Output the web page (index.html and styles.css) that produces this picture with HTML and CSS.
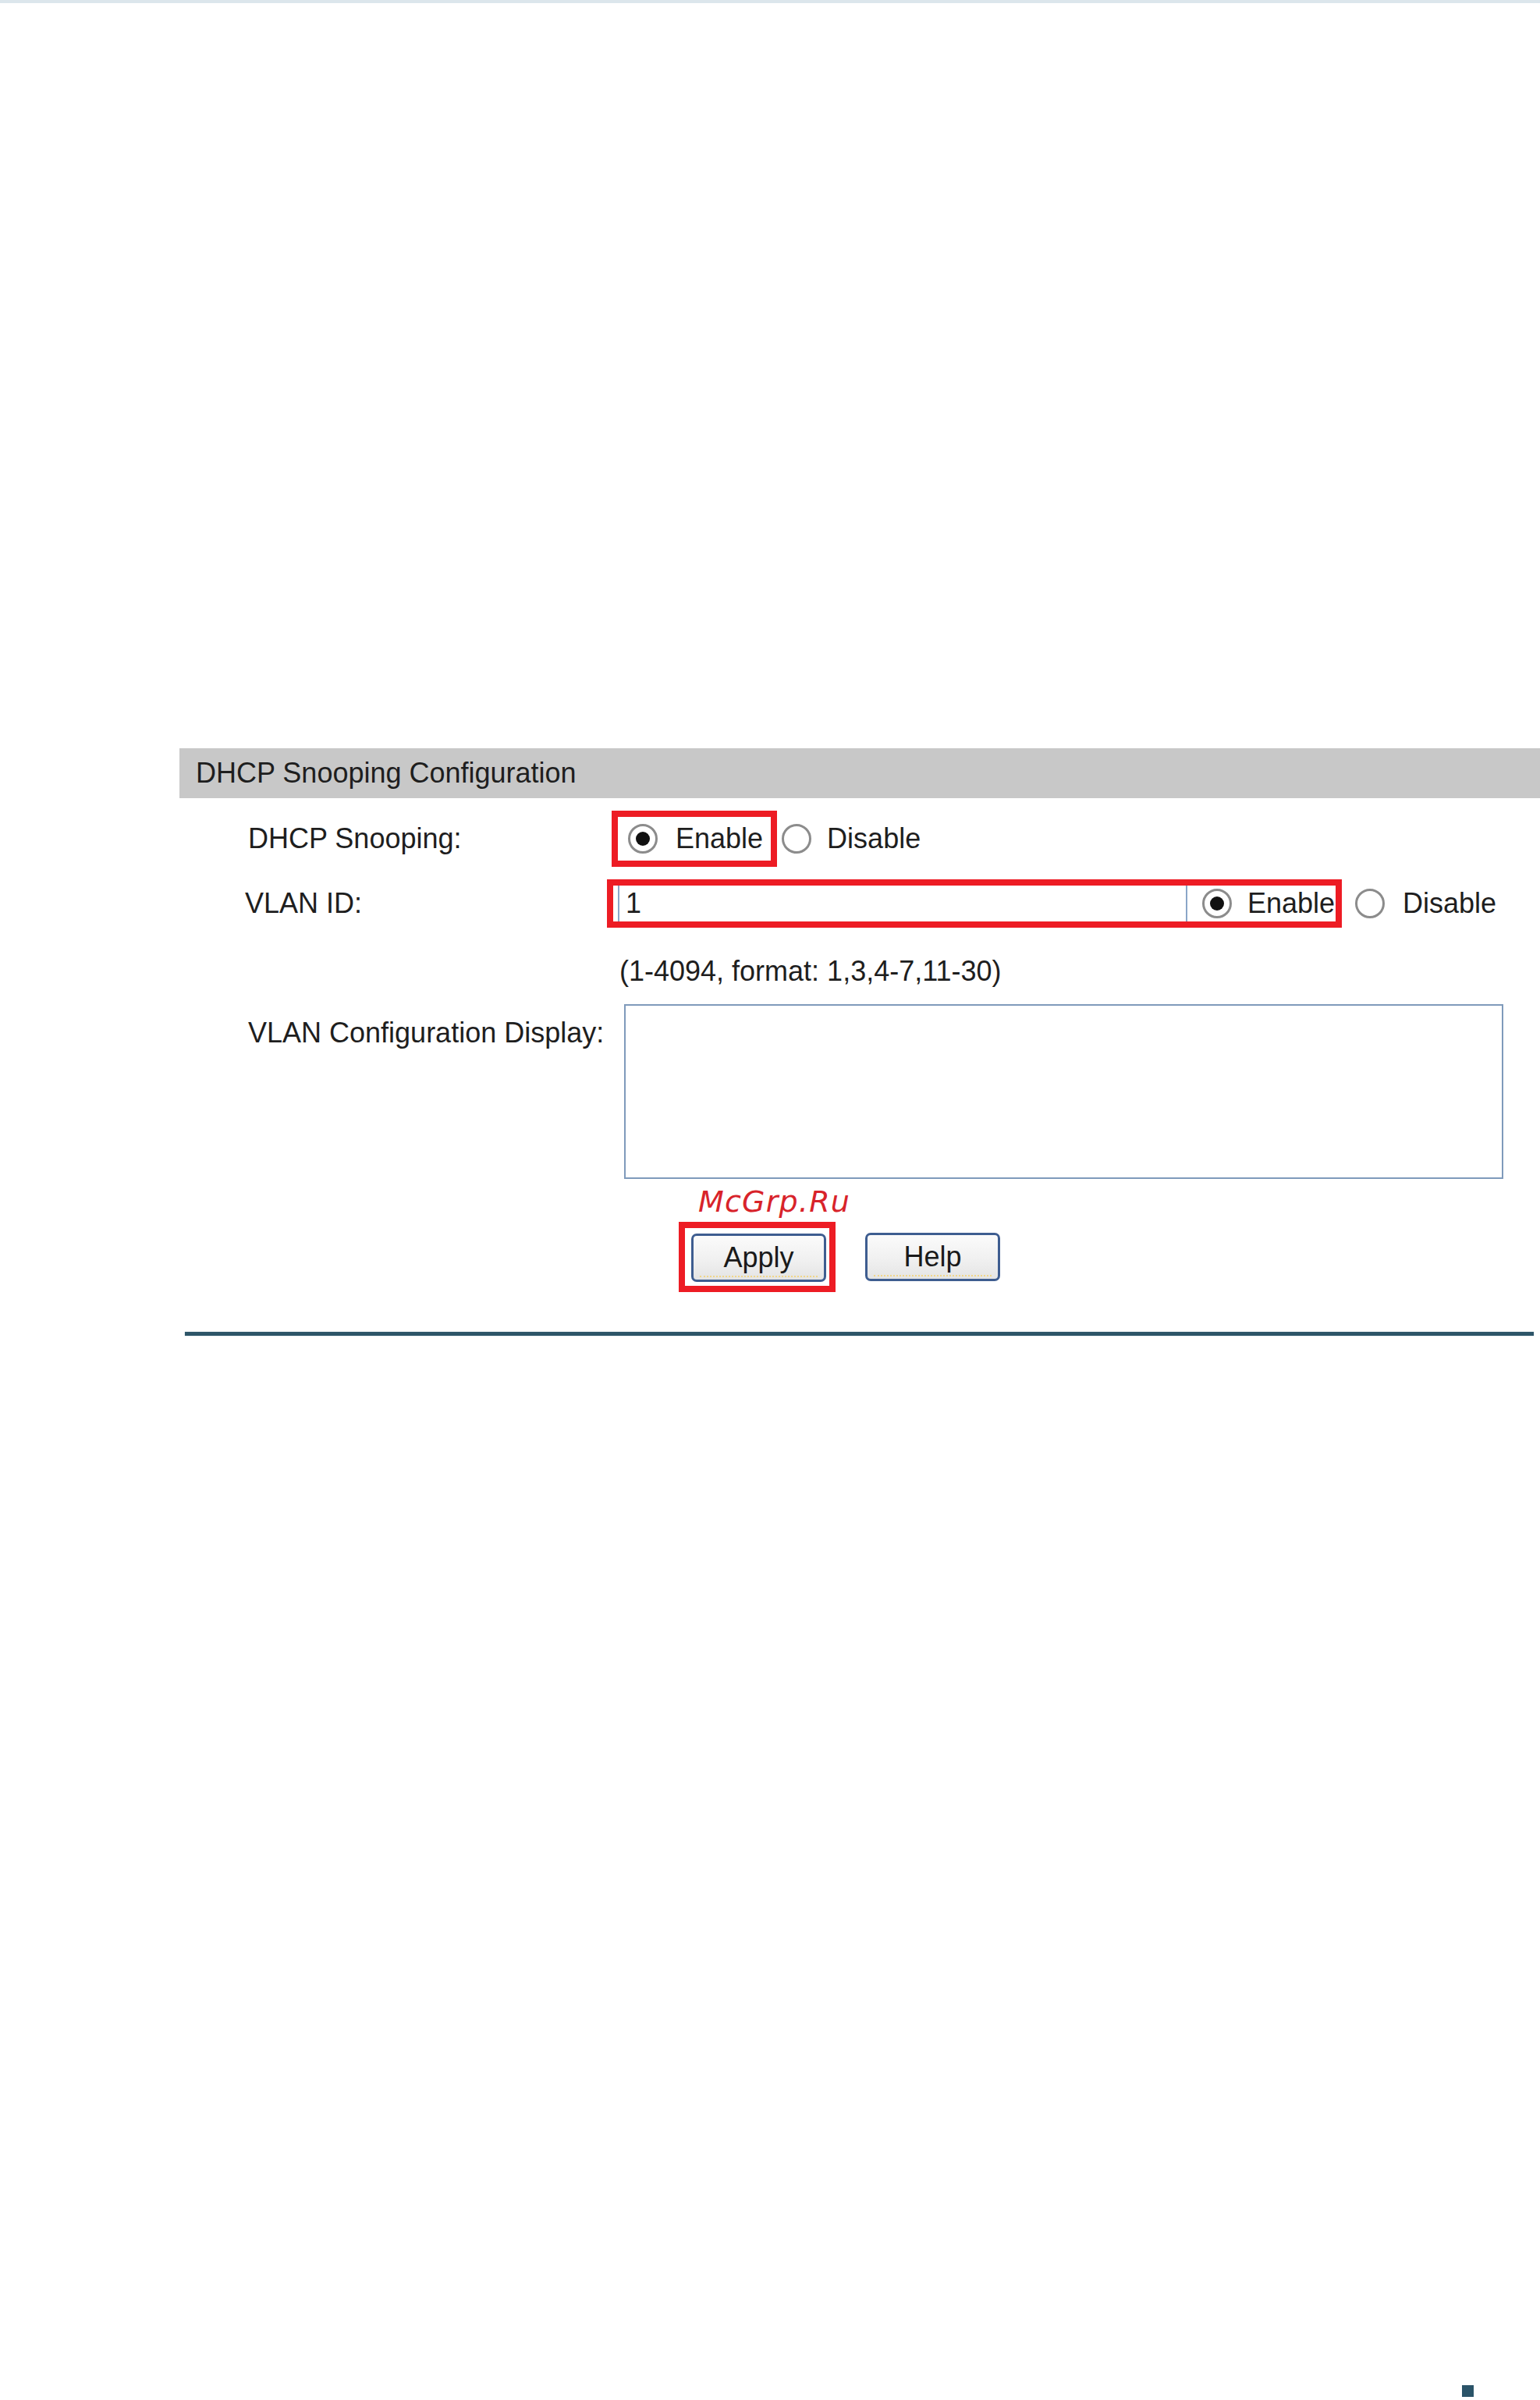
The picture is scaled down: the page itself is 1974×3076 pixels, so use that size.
FILE: index.html
```html
<!DOCTYPE html>
<html lang="en">
<head>
<meta charset="utf-8">
<title>DHCP Snooping Configuration</title>
<link rel="stylesheet" href="styles.css">
</head>
<body>
<div class="topline"></div>
<section class="panel">
  <div class="panel-head">DHCP Snooping Configuration</div>

  <div class="row row-snoop">
    <span class="label">DHCP Snooping:</span>
    <div class="ctrl">
      <span class="mark mark-snoop">
        <svg class="radio" viewBox="0 0 40 40"><circle cx="20" cy="20" r="17.5" fill="#fff" stroke="#8c8c8c" stroke-width="3"/><circle cx="20" cy="20" r="9" fill="#111"/></svg>
        <span class="opt">Enable</span>
      </span>
      <svg class="radio radio-off1" viewBox="0 0 40 40"><circle cx="20" cy="20" r="17.5" fill="#fff" stroke="#8c8c8c" stroke-width="3"/></svg>
      <span class="opt opt-dis1">Disable</span>
    </div>
  </div>

  <div class="row row-vlan">
    <span class="label label-vlan">VLAN ID:</span>
    <div class="ctrl">
      <span class="mark mark-vlan">
        <input class="vlan-input" type="text" value="1">
        <svg class="radio radio-on2" viewBox="0 0 40 40"><circle cx="20" cy="20" r="17.5" fill="#fff" stroke="#8c8c8c" stroke-width="3"/><circle cx="20" cy="20" r="9" fill="#111"/></svg>
        <span class="opt opt-en2">Enable</span>
      </span>
      <svg class="radio radio-off2" viewBox="0 0 40 40"><circle cx="20" cy="20" r="17.5" fill="#fff" stroke="#8c8c8c" stroke-width="3"/></svg>
      <span class="opt opt-dis2">Disable</span>
    </div>
  </div>

  <div class="row row-hint">
    <span class="label"></span>
    <div class="ctrl"><span class="hint">(1-4094, format: 1,3,4-7,11-30)</span></div>
  </div>

  <div class="row row-display">
    <span class="label label-top">VLAN Configuration Display:</span>
    <div class="ctrl"><textarea class="display" readonly></textarea></div>
  </div>

  <div class="row row-wm">
    <span class="label"></span>
    <div class="ctrl"><span class="watermark">McGrp.Ru</span></div>
  </div>

  <div class="row row-buttons">
    <span class="label"></span>
    <div class="ctrl">
      <span class="mark mark-apply"><button class="btn" type="button">Apply</button></span>
      <button class="btn btn-help" type="button">Help</button>
    </div>
  </div>

  <div class="rule"></div>
</section>
<div class="corner"></div>
</body>
</html>
```

FILE: styles.css
```css
html, body {
  margin: 0;
  padding: 0;
  background: #ffffff;
}

body {
  font-family: "Liberation Sans", Arial, sans-serif;
  color: #1e1e1e;
  font-size: 36px;
}

.topline {
  height: 4px;
  background: #dce6ec;
}

.panel {
  margin-top: 955px;
  margin-left: 226px;
  width: 1748px;
}

.panel-head {
  height: 64px;
  line-height: 64px;
  margin-left: 4px;
  padding-left: 21px;
  background: #c8c8c8;
  font-size: 36px;
  color: #1e1e1e;
}

.row {
  display: flex;
  align-items: center;
  padding-left: 92px;
}

.label {
  width: 460px;
  flex: 0 0 460px;
  line-height: 40px;
  white-space: nowrap;
}

.label-vlan {
  margin-left: -4px;
  padding-left: 4px;
  text-indent: -4px;
}

.ctrl {
  display: flex;
  align-items: center;
  line-height: 40px;
}

.opt {
  line-height: 40px;
  white-space: nowrap;
}

.radio {
  width: 40px;
  height: 40px;
  flex: 0 0 40px;
  display: block;
}

.mark {
  display: flex;
  align-items: center;
  border: 8px solid #ed1c24;
  box-sizing: border-box;
}

/* Row 1 */
.row-snoop {
  margin-top: 16px;
  height: 72px;
}

.mark-snoop {
  margin-left: 6px;
  height: 72px;
  padding-left: 12px;
  padding-right: 10px;
}

.mark-snoop .opt {
  margin-left: 22px;
}

.radio-off1 {
  margin-left: 5px;
}

.opt-dis1 {
  margin-left: 19px;
}

/* Row 2 */
.row-vlan {
  margin-top: 16px;
  height: 62px;
}

.mark-vlan {
  height: 62px;
  width: 942px;
  padding-right: 1px;
}

.vlan-input {
  margin: 0 0 0 6px;
  width: 730px;
  height: 46px;
  box-sizing: border-box;
  border: none;
  border-left: 2px solid #8aa6c8;
  border-right: 2px solid #8aa6c8;
  padding: 0 0 0 8px;
  font-family: "Liberation Sans", Arial, sans-serif;
  font-size: 36px;
  color: #1e1e1e;
  background: #ffffff;
  outline: none;
}

.radio-on2 {
  margin-left: 18px;
}

.opt-en2 {
  margin-left: 19px;
}

.radio-off2 {
  margin-left: 16px;
}

.opt-dis2 {
  margin-left: 22px;
}

/* Hint */
.row-hint {
  margin-top: 36px;
  height: 40px;
}

.hint {
  margin-left: 16px;
  white-space: nowrap;
}

/* Display */
.row-display {
  margin-top: 22px;
  align-items: flex-start;
}

.label-top {
  padding-top: 17px;
}

.display {
  display: block;
  margin: 0 0 0 22px;
  width: 1127px;
  height: 224px;
  box-sizing: border-box;
  border: 2px solid #7f9abb;
  padding: 0;
  resize: none;
  background: #ffffff;
  outline: none;
}

/* Watermark */
.row-wm {
  margin-top: 9px;
  height: 40px;
}

.watermark {
  margin-left: 117px;
  font-family: "DejaVu Sans", sans-serif;
  font-style: oblique;
  font-size: 38px;
  letter-spacing: 1.2px;
  line-height: 40px;
  color: #d8232a;
}

/* Buttons */
.row-buttons {
  margin-top: 6px;
  height: 90px;
}

.mark-apply {
  margin-left: 92px;
  height: 90px;
  padding: 7px 4px 5px 8px;
}

.btn {
  position: relative;
  width: 173px;
  height: 62px;
  margin: 0;
  padding: 0;
  box-sizing: border-box;
  border: 3px solid #3e5d90;
  border-radius: 7px;
  background: linear-gradient(#fbfbfb, #efefef 60%, #e4e4e4);
  font-family: "Liberation Sans", Arial, sans-serif;
  font-size: 36px;
  line-height: 52px;
  color: #1a1a1a;
  cursor: default;
}

.btn::after {
  content: "";
  position: absolute;
  left: 8px;
  right: 8px;
  bottom: 3px;
  border-bottom: 2px dotted #f0d68a;
}

.btn-help {
  margin-left: 38px;
}

.rule {
  margin-top: 51px;
  margin-left: 11px;
  width: 1729px;
  height: 5px;
  background: #2d5568;
  box-shadow: 0 0 1px #8aa3b0;
}

.corner {
  margin-top: 1345px;
  margin-left: 1874px;
  width: 15px;
  height: 15px;
  background: #2b5468;
}
```
